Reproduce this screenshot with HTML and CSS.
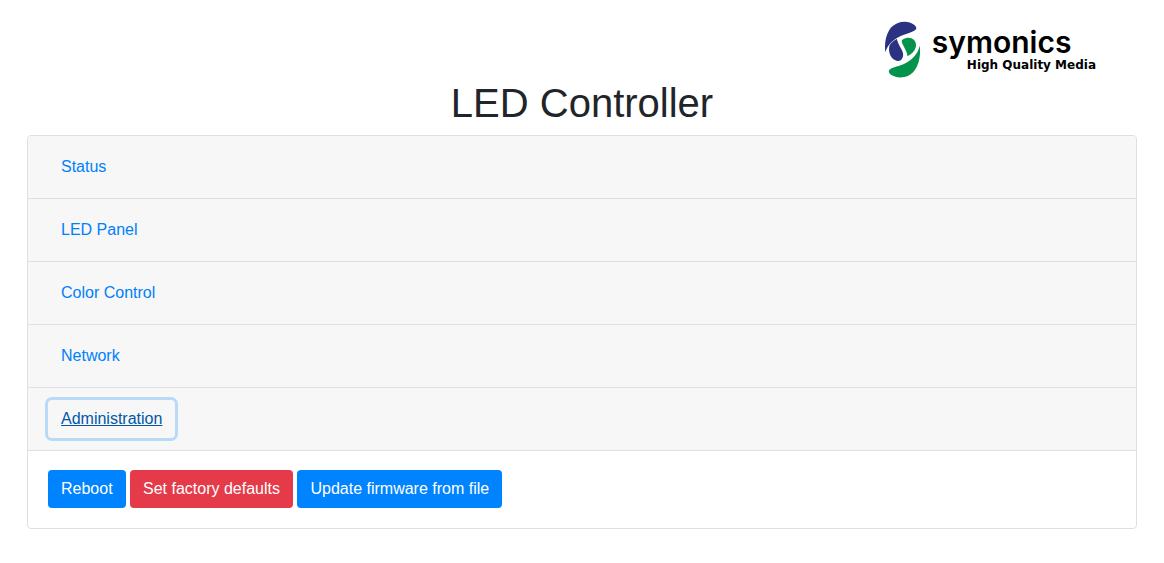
FILE: index.html
```html
<!DOCTYPE html>
<html lang="en">
<head>
<meta charset="utf-8">
<meta name="viewport" content="width=device-width, initial-scale=1">
<title>LED Controller</title>
<link rel="stylesheet" href="styles.css">
</head>
<body>
<div class="container">
  <header class="brand">
    <svg class="brand-mark" viewBox="42 33 110 172" aria-hidden="true">
      <path fill="#2b3281" d="M45 127C42 98 48 70 63 52C78 36 102 31 121 38C134 43 141 51 138 57C135 64 118 68 99 75C75 84 53 101 45 127Z"/>
      <path fill="#2b3281" d="M58 106C62 98 71 91 80 87C82 98 88 107 93 117C99 128 101 136 97 144C93 154 83 156 74 151C59 144 53 121 58 106Z"/>
      <path fill="#04934a" d="M95 91C102 84 114 81 124 85C135 90 140 101 137 112C134 124 124 133 112 139C111 128 106 120 101 110C97 102 94 97 95 91Z"/>
      <path fill="#04934a" d="M149 107C153 137 146 170 129 188C114 204 90 207 72 200C58 194 53 187 57 181C62 173 81 171 98 164C123 153 144 135 149 107Z"/>
    </svg>
    <div class="brand-text">
      <span class="brand-name">symonics</span>
      <span class="brand-tagline">High Quality Media</span>
    </div>
  </header>
  <h1 class="title">LED Controller</h1>
  <main class="accordion">
    <div class="card-header"><button type="button" class="btn btn-link">Status</button></div>
    <div class="card-header"><button type="button" class="btn btn-link">LED Panel</button></div>
    <div class="card-header"><button type="button" class="btn btn-link">Color Control</button></div>
    <div class="card-header"><button type="button" class="btn btn-link">Network</button></div>
    <div class="card-header"><button type="button" class="btn btn-link active" aria-expanded="true" aria-controls="administration">Administration</button></div>
    <div class="card-body" id="administration">
      <button type="button" class="btn btn-primary">Reboot</button>
      <button type="button" class="btn btn-danger">Set factory defaults</button>
      <button type="button" class="btn btn-primary">Update firmware from file</button>
    </div>
  </main>
</div>
</body>
</html>
```
FILE: styles.css
```css
*, *::before, *::after { box-sizing: border-box; }
body {
  margin: 0;
  background: #fff;
  color: #212529;
  font-family: "Liberation Sans", Arial, sans-serif;
  font-size: 16px;
  line-height: 24px;
}
.container { padding: 20px 27px 32px; }
.brand {
  display: flex;
  justify-content: flex-end;
  gap: 11px;
  padding: 1px 37px 1px 0;
}
.brand-mark { width: 37px; height: 57px; }
.brand-text {
  display: flex;
  flex-direction: column;
  color: #000;
}
.brand-name {
  font-family: Inter, sans-serif;
  font-size: 30px;
  font-weight: 600;
  line-height: 40px;
  padding-top: 1px;
}
.brand-tagline {
  font-family: "DejaVu Sans", sans-serif;
  font-size: 12px;
  font-weight: 700;
  line-height: 6px;
  padding: 0 4px 0 35px;
}
.title {
  margin: 0 0 8px;
  font-size: 40px;
  font-weight: 400;
  line-height: 48px;
  text-align: center;
}
.accordion {
  border: 1px solid #dfdfdf;
  border-radius: 4px;
  overflow: hidden;
}
.card-header {
  display: flex;
  padding: 12px 20px;
  background: #f7f7f7;
  border-bottom: 1px solid #dfdfdf;
}
.card-body { padding: 19px 20px 20px; line-height: 38px; }
.btn {
  height: 38px;
  padding: 6px 12px;
  border: 1px solid transparent;
  border-radius: 4px;
  background: transparent;
  font: inherit;
  line-height: 24px;
  vertical-align: top;
  cursor: pointer;
}
.btn-link { color: #0080fa; }
.btn-link:hover, .btn-link.active { color: #0058a8; text-decoration: underline; }
.btn-link.active { box-shadow: 0 0 0 3px #b8daf7; }
.btn-primary { background: #0083ff; color: #fff; }
.btn-danger { background: #e43a4a; color: #fff; }
```
